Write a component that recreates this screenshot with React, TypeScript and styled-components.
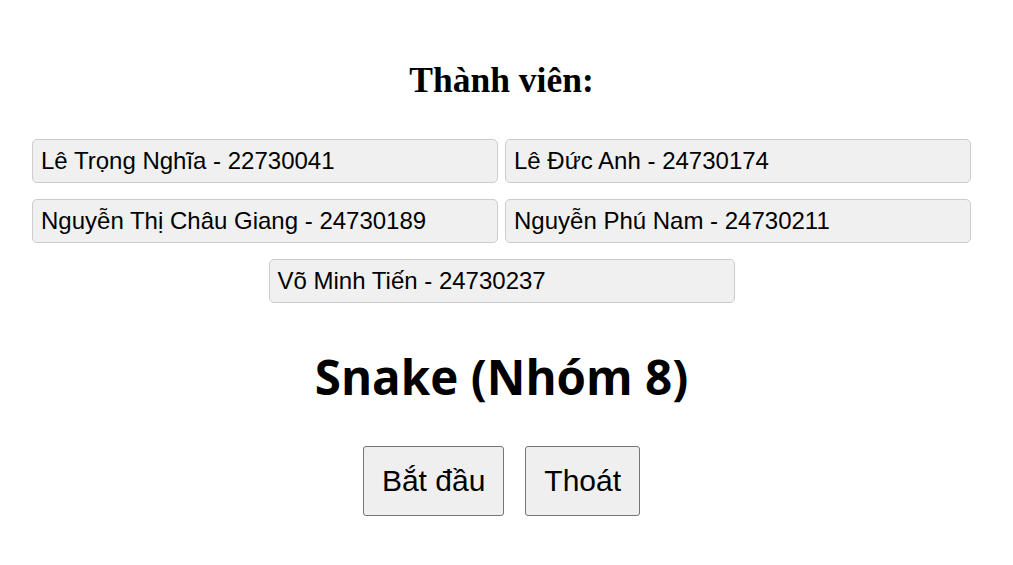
import React from "react";
import styled, { createGlobalStyle } from "styled-components";

const GlobalStyle = createGlobalStyle`
  body {
    margin: 0;
    background: #ffffff;
    font-family: "Liberation Sans", Arial, sans-serif;
  }
`;

const Page = styled.div`
  display: flex;
  flex-direction: column;
  align-items: center;
  padding: 59px 42px 0 32px;
`;

const Heading = styled.h2`
  margin: 0;
  font-family: "Liberation Serif", "Times New Roman", serif;
  font-size: 35.5px;
  font-weight: 700;
  color: #000000;
`;

const MemberList = styled.ul`
  display: flex;
  flex-wrap: wrap;
  justify-content: center;
  gap: 16px 7px;
  width: 939px;
  margin: 38px 0 0 0;
  padding: 0;
  list-style: none;
`;

const MemberCard = styled.li`
  box-sizing: border-box;
  width: 466px;
  height: 44px;
  padding: 7px 8px;
  background: #f0f0f0;
  border: 1px solid #cccccc;
  border-radius: 5px;
  font-size: 24px;
  line-height: 28px;
  color: #000000;
`;

const GameTitle = styled.h1`
  margin: 44px 0 0 0;
  font-family: "Comic Sans MS", "Open Sans", sans-serif;
  font-size: 47.5px;
  font-weight: 700;
  line-height: 60px;
  color: #000000;
`;

const ButtonRow = styled.div`
  display: flex;
  gap: 21px;
  margin-top: 39px;
`;

const MenuButton = styled.button`
  box-sizing: border-box;
  height: 70px;
  padding: 0 18px;
  background: #efefef;
  border: 1px solid #767676;
  border-radius: 3px;
  font-family: "Liberation Sans", Arial, sans-serif;
  font-size: 30px;
  color: #000000;
`;

const members = [
  "Lê Trọng Nghĩa - 22730041",
  "Lê Đức Anh - 24730174",
  "Nguyễn Thị Châu Giang - 24730189",
  "Nguyễn Phú Nam - 24730211",
  "Võ Minh Tiến - 24730237",
];

export default function App() {
  return (
    <>
      <GlobalStyle />
      <Page>
        <Heading>Thành viên:</Heading>
        <MemberList>
          {members.map((m) => (
            <MemberCard key={m}>{m}</MemberCard>
          ))}
        </MemberList>
        <GameTitle>Snake (Nhóm 8)</GameTitle>
        <ButtonRow>
          <MenuButton>Bắt đầu</MenuButton>
          <MenuButton>Thoát</MenuButton>
        </ButtonRow>
      </Page>
    </>
  );
}
